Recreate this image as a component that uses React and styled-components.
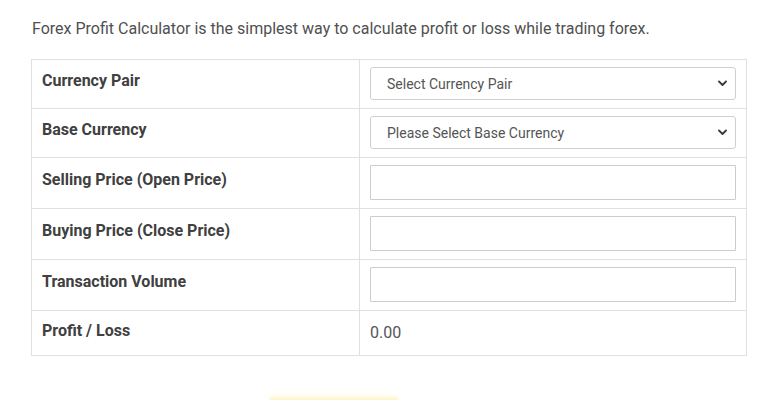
import React from "react";
import styled, { createGlobalStyle } from "styled-components";

const Global = createGlobalStyle`
  html, body { margin: 0; padding: 0; background: #fff; }
  body { font-family: Roboto, "Open Sans", Arial, sans-serif; color: #555; }
  * { box-sizing: border-box; }
`;

const Page = styled.div`
  width: 773px;
  height: 400px;
  overflow: hidden;
  padding: 18px 26px 0 31px;
`;

const Intro = styled.p`
  margin: 0 0 19px 1px;
  font-size: 16px;
  line-height: 22px;
  color: #505050;
`;

const Table = styled.table`
  width: 716px;
  border-collapse: collapse;
  border: 1px solid #e0e0e0;
`;

const Row = styled.tr``;

const Label = styled.td`
  width: 328px;
  border: 1px solid #e0e0e0;
  padding: ${(p) => (p.$tall ? "7px 10px 13px" : "10px 10px 14px")};
  vertical-align: middle;
  font-size: 16px;
  font-weight: 700;
  color: #404040;
  line-height: 20px;
`;

const Cell = styled.td`
  border: 1px solid #e0e0e0;
  padding: ${(p) => (p.$text ? "12px 10px 12px" : "7px 10px 8px")};
  vertical-align: middle;
  line-height: 20px;
`;

const SelectWrap = styled.div`
  position: relative;
  height: 33px;
`;

const Select = styled.select`
  appearance: none;
  -webkit-appearance: none;
  width: 100%;
  height: 33px;
  border: 1px solid #cfcfcf;
  border-radius: 3px;
  background: #fff;
  padding: 0 30px 0 16px;
  font-family: Roboto, Arial, sans-serif;
  font-size: 14px;
  color: #555;
  outline: none;
`;

const Chevron = styled.svg`
  position: absolute;
  right: 9px;
  top: 13px;
  pointer-events: none;
`;

const Input = styled.input`
  display: block;
  width: 100%;
  height: 35px;
  border: 1px solid #cccccc;
  border-radius: 1px;
  background: #fff;
  padding: 0 12px;
  font-family: Roboto, Arial, sans-serif;
  font-size: 14px;
  color: #555;
  outline: none;
`;

const Value = styled.span`
  font-size: 16px;
  color: #555;
`;

const Footer = styled.div`
  display: flex;
  justify-content: center;
  padding-top: 41px;
  padding-right: 110px;
`;

const Button = styled.div`
  width: 128px;
  height: 40px;
  background: linear-gradient(#fdf8d4, #fbefa0);
  border-radius: 2px;
  box-shadow: 0 0 6px rgba(240, 230, 140, 0.35);
`;

const ChevronIcon = () => (
  <Chevron width="9" height="7" viewBox="0 0 9 7">
    <path d="M1 1.5 L4.5 5 L8 1.5" fill="none" stroke="#3a3a3a" strokeWidth="1.8" strokeLinecap="round" strokeLinejoin="round" />
  </Chevron>
);

export default function App() {
  return (
    <>
      <Global />
      <Page>
        <Intro>
          Forex Profit Calculator is the simplest way to calculate profit or loss while trading forex.
        </Intro>
        <Table>
          <tbody>
            <Row>
              <Label $tall>Currency Pair</Label>
              <Cell>
                <SelectWrap>
                  <Select defaultValue="">
                    <option value="">Select Currency Pair</option>
                  </Select>
                  <ChevronIcon />
                </SelectWrap>
              </Cell>
            </Row>
            <Row>
              <Label $tall>Base Currency</Label>
              <Cell>
                <SelectWrap>
                  <Select defaultValue="">
                    <option value="">Please Select Base Currency</option>
                  </Select>
                  <ChevronIcon />
                </SelectWrap>
              </Cell>
            </Row>
            <Row>
              <Label $tall>Selling Price (Open Price)</Label>
              <Cell>
                <Input type="text" />
              </Cell>
            </Row>
            <Row>
              <Label $tall>Buying Price (Close Price)</Label>
              <Cell>
                <Input type="text" />
              </Cell>
            </Row>
            <Row>
              <Label $tall>Transaction Volume</Label>
              <Cell>
                <Input type="text" />
              </Cell>
            </Row>
            <Row>
              <Label>Profit / Loss</Label>
              <Cell $text>
                <Value>0.00</Value>
              </Cell>
            </Row>
          </tbody>
        </Table>
        <Footer>
          <Button />
        </Footer>
      </Page>
    </>
  );
}
